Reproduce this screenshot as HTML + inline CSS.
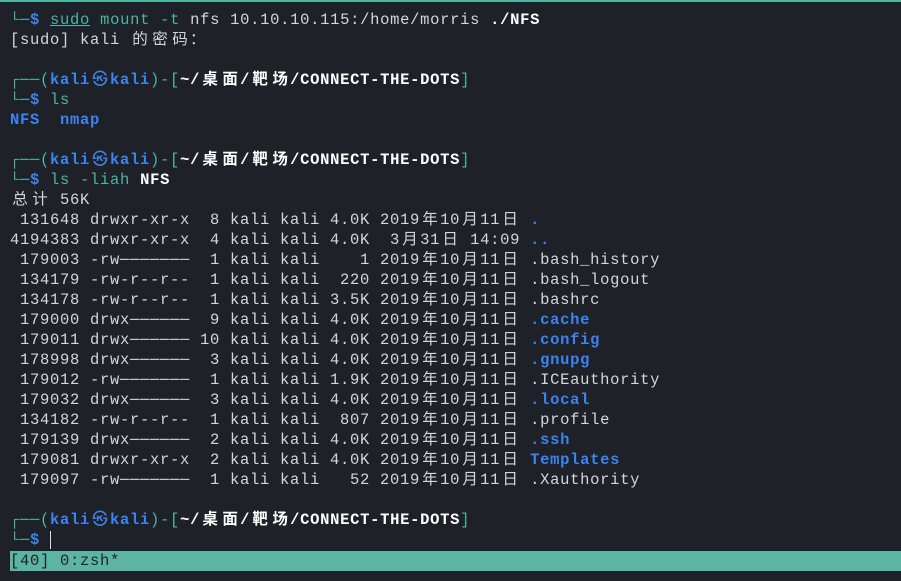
<html><head><style>
body{margin:0;width:901px;height:581px;background:#1e2127;overflow:hidden;position:relative;font-family:"Liberation Mono","Noto Sans CJK SC",monospace;font-size:15.5px;letter-spacing:0.7px;color:#d4d6d8}
.t{position:absolute;left:0;top:0;width:901px;height:2px;background:#4fb3a4}
.l{position:absolute;left:10px;height:20px;line-height:20px;white-space:pre}
.w{display:inline-block;width:20px;text-align:center;letter-spacing:0}
.b{color:#3b84f0;font-weight:bold}
.g{color:#4fb3a4}
.wb{color:#fff;font-weight:bold}
.bar{position:absolute;left:10px;top:551px;width:891px;height:20px;background:#5bb5a2;color:#1e2127;line-height:20px;white-space:pre}
.cur{position:absolute;left:50px;top:531px;width:1px;height:18px;background:#ddd}
</style></head><body>
<div class="t"></div>
<div class="l" style="top:10px"><span class="g">└─</span><span class="b">$</span> <span class="g" style="text-decoration:underline">sudo</span> <span class="g">mount -t</span> nfs 10.10.10.115:/home/morris <span class="wb">./NFS</span></div>
<div class="l" style="top:30px">[sudo] kali <span class="w">的</span><span class="w">密</span><span class="w">码</span>：</div>
<div class="l" style="top:70px"><span class="g">┌──(</span><span class="b">kali<span class="w">㉿</span>kali</span><span class="g">)-[</span><span class="wb">~/<span class="w">桌</span><span class="w">面</span>/<span class="w">靶</span><span class="w">场</span>/CONNECT-THE-DOTS</span><span class="g">]</span></div>
<div class="l" style="top:90px"><span class="g">└─</span><span class="b">$</span> <span class="g">ls</span></div>
<div class="l" style="top:110px"><span class="b">NFS  nmap</span></div>
<div class="l" style="top:150px"><span class="g">┌──(</span><span class="b">kali<span class="w">㉿</span>kali</span><span class="g">)-[</span><span class="wb">~/<span class="w">桌</span><span class="w">面</span>/<span class="w">靶</span><span class="w">场</span>/CONNECT-THE-DOTS</span><span class="g">]</span></div>
<div class="l" style="top:170px"><span class="g">└─</span><span class="b">$</span> <span class="g">ls -liah</span> <span class="wb">NFS</span></div>
<div class="l" style="top:190px"><span class="w">总</span><span class="w">计</span> 56K</div>
<div class="l" style="top:210px"> 131648 drwxr-xr-x  8 kali kali 4.0K 2019<span class="w">年</span>10<span class="w">月</span>11<span class="w">日</span> <span class="b">.</span></div>
<div class="l" style="top:230px">4194383 drwxr-xr-x  4 kali kali 4.0K  3<span class="w">月</span>31<span class="w">日</span> 14:09 <span class="b">..</span></div>
<div class="l" style="top:250px"> 179003 -rw───────  1 kali kali    1 2019<span class="w">年</span>10<span class="w">月</span>11<span class="w">日</span> .bash_history</div>
<div class="l" style="top:270px"> 134179 -rw-r--r--  1 kali kali  220 2019<span class="w">年</span>10<span class="w">月</span>11<span class="w">日</span> .bash_logout</div>
<div class="l" style="top:290px"> 134178 -rw-r--r--  1 kali kali 3.5K 2019<span class="w">年</span>10<span class="w">月</span>11<span class="w">日</span> .bashrc</div>
<div class="l" style="top:310px"> 179000 drwx──────  9 kali kali 4.0K 2019<span class="w">年</span>10<span class="w">月</span>11<span class="w">日</span> <span class="b">.cache</span></div>
<div class="l" style="top:330px"> 179011 drwx────── 10 kali kali 4.0K 2019<span class="w">年</span>10<span class="w">月</span>11<span class="w">日</span> <span class="b">.config</span></div>
<div class="l" style="top:350px"> 178998 drwx──────  3 kali kali 4.0K 2019<span class="w">年</span>10<span class="w">月</span>11<span class="w">日</span> <span class="b">.gnupg</span></div>
<div class="l" style="top:370px"> 179012 -rw───────  1 kali kali 1.9K 2019<span class="w">年</span>10<span class="w">月</span>11<span class="w">日</span> .ICEauthority</div>
<div class="l" style="top:390px"> 179032 drwx──────  3 kali kali 4.0K 2019<span class="w">年</span>10<span class="w">月</span>11<span class="w">日</span> <span class="b">.local</span></div>
<div class="l" style="top:410px"> 134182 -rw-r--r--  1 kali kali  807 2019<span class="w">年</span>10<span class="w">月</span>11<span class="w">日</span> .profile</div>
<div class="l" style="top:430px"> 179139 drwx──────  2 kali kali 4.0K 2019<span class="w">年</span>10<span class="w">月</span>11<span class="w">日</span> <span class="b">.ssh</span></div>
<div class="l" style="top:450px"> 179081 drwxr-xr-x  2 kali kali 4.0K 2019<span class="w">年</span>10<span class="w">月</span>11<span class="w">日</span> <span class="b">Templates</span></div>
<div class="l" style="top:470px"> 179097 -rw───────  1 kali kali   52 2019<span class="w">年</span>10<span class="w">月</span>11<span class="w">日</span> .Xauthority</div>
<div class="l" style="top:510px"><span class="g">┌──(</span><span class="b">kali<span class="w">㉿</span>kali</span><span class="g">)-[</span><span class="wb">~/<span class="w">桌</span><span class="w">面</span>/<span class="w">靶</span><span class="w">场</span>/CONNECT-THE-DOTS</span><span class="g">]</span></div>
<div class="l" style="top:530px"><span class="g">└─</span><span class="b">$</span></div>
<div class="cur"></div>
<div class="bar">[40] 0:zsh*</div>
</body></html>
